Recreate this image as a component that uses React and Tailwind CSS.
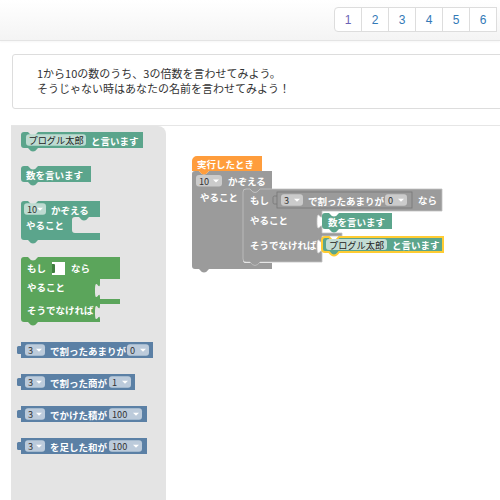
const TEAL = '#5ba58c'
const GREEN = '#5ba55b'
const BLUE = '#5b80a5'
const GRAY = '#9b9b9b'
const ORANGE = '#ff9d3c'

// statement block with top notch and bottom bump
function stmt(x, y, w, h) {
  return `M${x},${y + 3} a3,3 0 0 1 3,-3 H${x + 7} q5,7 10,0 H${x + w} V${y + h} H${x + 17} q-5,7 -10,0 H${x + 3} a3,3 0 0 1 -3,-3 Z`
}

function Label({ x, y, children }) {
  return (
    <text x={x} y={y} fill="#fff" fontSize="9.5" fontWeight="700" dominantBaseline="central">
      {children}
    </text>
  )
}

function Field({ x, y, w, text, fill, dropdown }) {
  return (
    <g>
      <rect x={x} y={y} width={w} height={11.5} rx={3} fill={fill} />
      <text x={x + 3} y={y + 6} fill="#333" fontSize="9.2" dominantBaseline="central">
        {text}
      </text>
      {dropdown && (
        <polygon
          points={`${x + w - 9},${y + 4.5} ${x + w - 3},${y + 4.5} ${x + w - 6},${y + 7.5}`}
          fill="#fff"
        />
      )}
    </g>
  )
}

// value (output) block with a small tab on the left
function ValueBlock({ x, y, w, fill, stroke, fieldFill, a, label, b, aw, bx, bw }) {
  return (
    <g>
      <rect x={x - 4} y={y + 4} width={6} height={8} rx={1.5} fill={fill} stroke={stroke} strokeWidth={stroke ? 0.8 : 0} />
      <rect x={x} y={y} width={w} height={16} fill={fill} stroke={stroke} strokeWidth={stroke ? 0.8 : 0} />
      <Field x={x + 4} y={y + 2.3} w={aw} text={a} fill={fieldFill} dropdown />
      <Label x={x + aw + 9} y={y + 8.5}>{label}</Label>
      <Field x={bx} y={y + 2.3} w={bw} text={b} fill={fieldFill} dropdown />
    </g>
  )
}

function Flyout() {
  const tealField = '#bedbd1'
  const blueField = '#bccbdb'
  return (
    <svg width="155" height="374" viewBox="11 127 155 374" className="block">
      {/* プログル太郎 と言います */}
      <path d={stmt(21, 133, 122, 16)} fill={TEAL} />
      <rect x={26} y={135.3} width={60} height={11.5} rx={3} fill={tealField} />
      <text x={28.5} y={141.3} fill="#222" fontSize="9.2" dominantBaseline="central">プログル太郎</text>
      <Label x={91} y={141.5}>と言います</Label>

      {/* 数を言います */}
      <path d={stmt(21, 167, 70, 16)} fill={TEAL} />
      <Label x={26} y={175.5}>数を言います</Label>

      {/* 10 かぞえる / やること */}
      <path
        d={`M21,205 a3,3 0 0 1 3,-3 H28 q5,7 10,0 H100 V218 H89 q-5,7 -10,0 H75 a3,3 0 0 0 -3,3 V231 a3,3 0 0 0 3,3 H100 V241 H38 q-5,7 -10,0 H24 a3,3 0 0 1 -3,-3 Z`}
        fill={TEAL}
      />
      <Field x={24} y={204.3} w={22} text="10" fill={tealField} dropdown />
      <Label x={51} y={210.5}>かぞえる</Label>
      <Label x={26} y={226}>やること</Label>

      {/* もし なら / やること / そうでなければ */}
      <path
        d={`M21,261 a3,3 0 0 1 3,-3 H28 q5,7 10,0 H120 V280 H100 V284 c0,10 -5,-8 -5,7.5 s5,-2.5 5,7.5 V300 H120 V305 H100 V306 c0,10 -5,-8 -5,7.5 s5,-2.5 5,7.5 V323 H38 q-5,7 -10,0 H24 a3,3 0 0 1 -3,-3 Z`}
        fill={GREEN}
      />
      <Label x={27} y={269}>もし</Label>
      <rect x={52} y={263} width={13} height={13} fill="#fff" />
      <path d="M52,265 h2 a1,1 0 0 1 1,1 v7 a1,1 0 0 1 -1,1 h-2 Z" fill="#3f7f3f" />
      <Label x={71} y={269}>なら</Label>
      <Label x={27} y={288}>やること</Label>
      <Label x={27} y={311}>そうでなければ</Label>

      {/* math blocks */}
      <ValueBlock x={21} y={343} w={132} fill={BLUE} fieldFill={blueField} a="3" aw={20} label="で割ったあまりが" b="0" bx={127} bw={22} />
      <ValueBlock x={21} y={375} w={114} fill={BLUE} fieldFill={blueField} a="3" aw={20} label="で割った商が" b="1" bx={109} bw={22} />
      <ValueBlock x={21} y={407} w={126} fill={BLUE} fieldFill={blueField} a="3" aw={20} label="でかけた積が" b="100" bx={109} bw={33} />
      <ValueBlock x={21} y={439} w={126} fill={BLUE} fieldFill={blueField} a="3" aw={20} label="を足した和が" b="100" bx={109} bw={33} />
    </svg>
  )
}

function Workspace() {
  const grayField = '#cbcbcb'
  const tealField = '#c3dcd3'
  return (
    <svg width="334" height="374" viewBox="166 127 334 374" className="block">
      {/* 10 かぞえる loop (gray) */}
      <path
        d={`M192,175 a3,3 0 0 1 3,-3 H199 q5,7 10,0 H272 V190 H260 q-5,7 -10,0 H246 a3,3 0 0 0 -3,3 V261 a3,3 0 0 0 3,3 H272 V270 H209 q-5,7 -10,0 H195 a3,3 0 0 1 -3,-3 Z`}
        fill={GRAY}
      />
      <Field x={196} y={176} w={26} text="10" fill={grayField} dropdown />
      <Label x={228} y={182}>かぞえる</Label>
      <Label x={200} y={198}>やること</Label>

      {/* 実行したとき hat */}
      <path d={`M192,172 V162 a5,5 0 0 1 5,-5 H262 V172 H209 q-5,7 -10,0 Z`} fill={ORANGE} />
      <Label x={197} y={165}>実行したとき</Label>

      {/* もし block (gray) */}
      <path
        d={`M243,193 a3,3 0 0 1 3,-3 H250 q5,7 10,0 H442 V212 H322 V215 c0,10 -5,-8 -5,7.5 s5,-2.5 5,7.5 V234 H342 V237 H322 V240 c0,10 -5,-8 -5,7.5 s5,-2.5 5,7.5 V263 H260 q-5,7 -10,0 H246 a3,3 0 0 1 -3,-3 Z`}
        fill={GRAY}
        stroke="#c2c2c2"
        strokeWidth="0.8"
      />
      <Label x={250} y={201}>もし</Label>
      <ValueBlock x={277} y={193} w={135} fill={GRAY} stroke="#767676" fieldFill={grayField} a="3" aw={22} label="で割ったあまりが" b="0" bx={385} bw={22} />
      <Label x={418} y={201}>なら</Label>
      <Label x={250} y={221}>やること</Label>
      <Label x={250} y={246}>そうでなければ</Label>

      {/* 数を言います */}
      <path d={stmt(322, 214, 70, 16)} fill={TEAL} />
      <Label x={328} y={222.5}>数を言います</Label>

      {/* プログル太郎 と言います (selected) */}
      <path d={stmt(322, 238, 121, 15)} fill={TEAL} stroke="#fc3" strokeWidth="2" />
      <rect x={326} y={240} width={61} height={11} rx={3} fill={tealField} />
      <text x={329} y={245.8} fill="#222" fontSize="9.2" dominantBaseline="central">プログル太郎</text>
      <Label x={392} y={246}>と言います</Label>
    </svg>
  )
}

const pages = [1, 2, 3, 4, 5, 6]

export default function App() {
  return (
    <div className="w-[500px] h-[500px] overflow-hidden bg-white font-['Noto_Sans_CJK_JP',sans-serif]">
      <div className="h-[41px] bg-gradient-to-b from-white to-[#f4f4f4] border-b border-[#e4e4e4] shadow-[0_1px_2px_rgba(0,0,0,0.04)] pt-[7px] pl-[334px]">
        <ul className="flex font-['Liberation_Sans',sans-serif] text-[12px]">
          {pages.map((p, i) => (
            <li
              key={p}
              className={
                'shrink-0 w-[28px] h-[25px] flex items-center justify-center border border-[#ddd] bg-white ' +
                (i === 0 ? 'rounded-l-[4px] text-[#6b63b5]' : '-ml-px text-[#337ab7]')
              }
            >
              {p}
            </li>
          ))}
        </ul>
      </div>

      <div className="mt-[13px] ml-[12px] w-[520px] h-[55px] border border-[#ddd] rounded-[3px] pl-[24px] pt-[11px] text-[11px] leading-[15px] text-[#333]">
        <p>1から10の数のうち、3の倍数を言わせてみよう。</p>
        <p>そうじゃない時はあなたの名前を言わせてみよう！</p>
      </div>

      <div className="mt-[16px] ml-[11px] border-t border-[#e6e6e6] flex h-[380px]">
        <div className="w-[155px] shrink-0 bg-[#e4e4e4] rounded-tr-[8px] overflow-hidden">
          <Flyout />
        </div>
        <div className="flex-1 bg-white overflow-hidden">
          <Workspace />
        </div>
      </div>
    </div>
  )
}
